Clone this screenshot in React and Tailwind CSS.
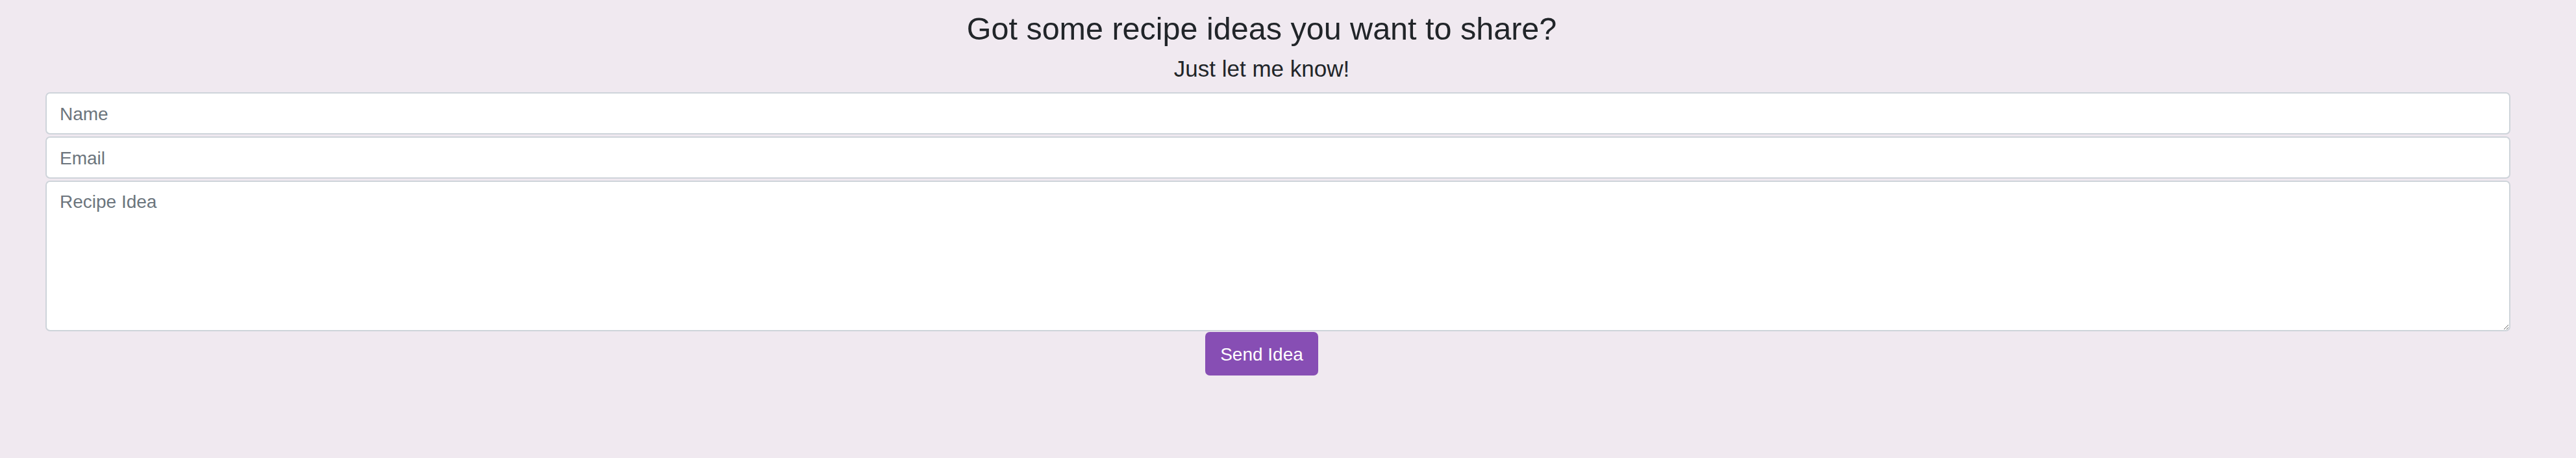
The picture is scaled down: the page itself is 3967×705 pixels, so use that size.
export default function App() {
  return (
    <div className="min-h-[705px] w-full bg-[#f0e9f0] font-['Liberation_Sans',Arial,sans-serif] text-[#212529]">
      {/* Contenido centrado */}
      <div className="w-[3886px] pt-[15px] flex flex-col items-center">
        <h1 className="text-[48.5px] leading-[58px]">Got some recipe ideas you want to share?</h1>
        <p className="mt-[12px] text-[35px] leading-[41px]">Just let me know!</p>

        {/* Formulario */}
        <form className="mt-[16px] w-full flex flex-col items-center">
          <div className="w-full pl-[70px] pr-[20px] flex flex-col gap-[3px]">
            <input
              type="text"
              placeholder="Name"
              className="w-full h-[65px] bg-white border-2 border-[#ced4da] rounded-[7px] px-[20px] pt-[3px] text-[28px] text-[#495057] placeholder:text-[#6c757d] outline-none"
            />
            <input
              type="email"
              placeholder="Email"
              className="w-full h-[65px] bg-white border-2 border-[#ced4da] rounded-[7px] px-[20px] pt-[3px] text-[28px] text-[#495057] placeholder:text-[#6c757d] outline-none"
            />
            <textarea
              placeholder="Recipe Idea"
              className="w-full h-[232px] bg-white border-2 border-[#ced4da] rounded-[7px] px-[20px] py-[10px] text-[28px] leading-[42px] text-[#495057] placeholder:text-[#6c757d] outline-none block"
            />
          </div>
          <button
            type="submit"
            className="mt-[1px] w-[174px] h-[67px] pt-[2px] bg-[#874eb4] text-white text-[28px] rounded-[7px]"
          >
            Send Idea
          </button>
        </form>
      </div>
    </div>
  );
}
